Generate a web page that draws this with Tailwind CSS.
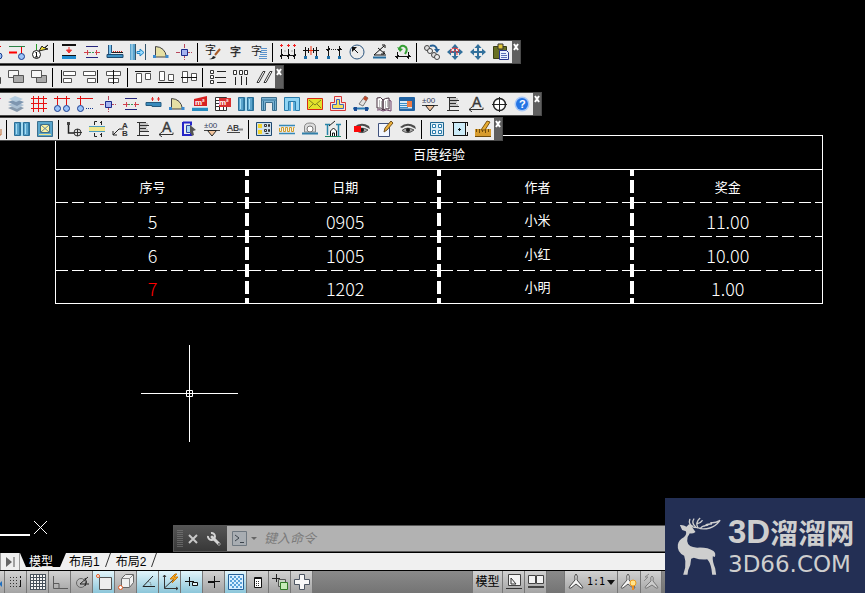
<!DOCTYPE html>
<html lang="zh-CN">
<head>
<meta charset="utf-8">
<meta name="viewport" content="width=device-width, initial-scale=1">
<title>CAD</title>
<script src="https://cdn.jsdelivr.net/npm/@tailwindcss/browser@4"></script>
</head>
<body class="flex min-h-screen flex-col overflow-hidden bg-black font-['Liberation_Sans','Noto_Sans_CJK_SC',sans-serif] text-xs text-black">

<!-- Shared icon parts -->
<svg class="hidden" aria-hidden="true">
  <defs>
    <symbol id="door" viewBox="0 0 16 16"><path d="M2.500 13V2.500Q12 3 13.500 13z" fill="#e6e0a4" stroke="#444"/><path d="M0 11h3v3h-3zM12.500 11h3v3h-3z" fill="#3b8ad0"/></symbol>
    <symbol id="node" viewBox="0 0 16 16"><path d="M0 8.500h16M8.500 0v16" stroke="#b8475c" stroke-dasharray="4 1"/><path d="M5.500 5.500h6v6h-6z" fill="#a5b2f0" stroke="#1c2a8c"/></symbol>
    <symbol id="opening" viewBox="0 0 16 16"><path d="M2 2.500h12M2 13.500h12" stroke="#26267c"/><path d="M5 8.500h6" stroke="#3d9a58" stroke-dasharray="2 1"/><path d="M0 8.500h5M3.500 6v5M11 8.500h5M12.500 6v5" stroke="#d2404c"/></symbol>
    <symbol id="window" viewBox="0 0 16 16"><path d="M.5 1.500h6v13h-6zM9.500 1.500h6v13h-6z" fill="#5ca4cc" stroke="#2a6f98"/><path d="M7 1h2v14h-2z" fill="#a8dcf2"/><path d="M2.500 3v10M11.500 3v10" stroke="#a4def4"/><path d="M5.500 2v12M14.500 2v12" stroke="#327fa8"/></symbol>
    <symbol id="move" viewBox="0 0 16 16"><path d="M8 0l3.500 4H9v3h3V4.500L16 8l-4 3.500V9H9v3h2.500L8 16l-3.500-4H7V9H4v2.500L0 8l4-3.500V7h3V4H4.500z" fill="#32709c"/></symbol>
    <symbol id="flagnote" viewBox="0 0 16 16"><path d="M4.500 1v14M2 1.500h9M5 4.500h9M5 7.500h6M5 10.500h9M2 14.500h12" stroke="#303030"/><path d="M5 3h8M5 6h7M5 9h8" stroke="#999"/></symbol>
    <symbol id="arrowtext" viewBox="0 0 16 16"><text x="4" y="11" font-family="Liberation Sans" font-size="14" stroke="#383838" stroke-width=".4" fill="#383838">A</text><path d="M1 13.500h14v-2M4 11l-3 2.500L4 16" stroke="#303030" fill="none"/></symbol>
    <symbol id="level" viewBox="0 0 16 16"><text x="0" y="7" font-family="Liberation Sans" font-size="8" fill="#34405c">±00</text><path d="M0 9.500h16" stroke="#444"/><path d="M3.500 9.500h9L8 15z" fill="#f2c49c" stroke="#222"/></symbol>
    <symbol id="eye" viewBox="0 0 16 16"><path d="M0 6Q7 0 15 5l1 3-3-1.500Q8 3 2 7z" fill="#4c4c4c"/><path d="M2 9.500Q7 5 14 9q-6 5-12 .5z" fill="#aaa" stroke="#555"/><circle cx="8" cy="9" r="2" fill="#1c1c1c"/></symbol>
  </defs>
</svg>

<main class="relative flex-1">
  <!-- Drawing: table entity -->
  <table class="mt-[135px] mr-[42px] ml-[55px] w-[calc(100%-97px)] table-fixed border-separate border-spacing-0 border border-white text-center text-[13px] text-white [&_td]:p-0 [&_th]:p-0 [&_th]:font-normal">
    <colgroup><col class="w-[25.2%]"><col class="w-[25.1%]"><col class="w-[25.1%]"><col></colgroup>
    <thead>
      <tr class="h-[34px]"><th colspan="4" class="border-b border-white pt-1!">百度经验</th></tr>
      <tr class="h-[33px] [&>th]:pt-[2px]! [&>th]:[background:repeating-linear-gradient(90deg,#fff_0_12px,transparent_12px_16px,#fff_16px_28px,transparent_28px_33px)_0_100%/100%_1px_no-repeat] [&>th:not(:last-child)]:[background:repeating-linear-gradient(180deg,#fff_0_6px,transparent_6px_10px,#fff_10px_17px)_100%_0/4px_100%_no-repeat,repeating-linear-gradient(90deg,#fff_0_12px,transparent_12px_16px,#fff_16px_28px,transparent_28px_33px)_0_100%/100%_1px_no-repeat]">
        <th>序号</th><th>日期</th><th>作者</th><th>奖金</th>
      </tr>
    </thead>
    <tbody class="[&>tr>td]:pt-[2px]! [&>tr>td:not(:last-child)]:[background:repeating-linear-gradient(180deg,#fff_0_6px,transparent_6px_10px,#fff_10px_17px)_100%_0/4px_100%_no-repeat,repeating-linear-gradient(90deg,#fff_0_12px,transparent_12px_16px,#fff_16px_28px,transparent_28px_33px)_0_100%/100%_1px_no-repeat] [&>tr>td:last-child]:[background:repeating-linear-gradient(90deg,#fff_0_12px,transparent_12px_16px,#fff_16px_28px,transparent_28px_33px)_0_100%/100%_1px_no-repeat] [&>tr:last-child>td:last-child]:bg-none! [&>tr:last-child>td:not(:last-child)]:[background:repeating-linear-gradient(180deg,#fff_0_6px,transparent_6px_10px,#fff_10px_17px)_100%_0/4px_100%_no-repeat]! [&_.num]:font-['Noto_Sans_CJK_SC',sans-serif] [&_.num]:text-lg [&_.num]:leading-6 [&_.num]:font-light">
      <tr class="h-[34px]"><td class="num">5</td><td class="num">0905</td><td>小米</td><td class="num">11.00</td></tr>
      <tr class="h-[34px]"><td class="num">6</td><td class="num">1005</td><td>小红</td><td class="num">10.00</td></tr>
      <tr class="h-[32px]"><td class="num text-[#f00]">7</td><td class="num">1202</td><td>小明</td><td class="num">1.00</td></tr>
    </tbody>
  </table>

  <!-- Crosshair cursor -->
  <svg class="absolute top-[345px] left-[141px] h-[97px] w-[97px]" viewBox="0 0 97 97" fill="none" stroke="#fff"><path d="M0 48.500h97M48.500 0v97M45.500 45.500h6v6h-6z"/></svg>
  <!-- UCS axis -->
  <svg class="absolute bottom-[17px] left-0 h-4 w-12" viewBox="0 0 48 16" fill="none" stroke="#fff"><path d="M34 1l13 13M47 1l-13 13"/><path d="M0 15h30" stroke-width="2"/></svg>

  <!-- Floating toolbars -->
  <div class="absolute top-10 left-0 flex flex-col items-start
    [&>div]:flex [&>div]:h-6 [&>div]:border-y [&>div]:border-r [&>div]:border-[#4a4a4a] [&>div]:bg-[#ececec]
    [&_button]:flex [&_button]:w-[23px] [&_button]:shrink-0 [&_button]:items-center [&_button]:justify-center
    [&_svg]:size-4 [&_svg]:overflow-visible [&_svg]:fill-none
    [&_i]:mx-[2px] [&_i]:h-[19px] [&_i]:w-[2px] [&_i]:self-center [&_i]:border-l [&_i]:border-black
    [&_.close]:w-2! [&_.close]:items-start! [&_.close]:bg-[#5f5f5f] [&_.close]:pt-[3px] [&_.close_svg]:h-[6px]! [&_.close_svg]:w-[6px]!">

    <div class="-ml-[18px]" role="toolbar" aria-label="轴网与墙体">
      <button aria-label="轴线"><svg viewBox="0 0 16 16"><path d="M3 2.500h12M13.500 2v8" stroke="#d00"/><circle cx="13" cy="12" r="3" fill="#9cc4f8" stroke="#1a3c90"/></svg></button>
      <button aria-label="轴号"><svg viewBox="0 0 16 16"><path d="M0 2.500h16" stroke="#2c8246"/><path d="M0 8.500h8" stroke="#f00" stroke-width="2"/><path d="M12.500 3v7" stroke="#e00"/><circle cx="12.500" cy="12.500" r="3" fill="#9cc4f8" stroke="#1a3c90"/></svg></button>
      <button aria-label="编号"><svg viewBox="0 0 16 16"><circle cx="4.500" cy="10.500" r="4" fill="#fff" stroke="#111"/><path d="M3.500 9l1-1v5M3 13h3" stroke="#111"/><path d="M4.500 6V0" stroke="#2b9b2b"/><path d="M7 7l3-5 2 2 4-3-3 3 3 1-5 1z" fill="#f2e032" stroke="#222"/></svg></button>
      <i></i>
      <button aria-label="移动墙"><svg viewBox="0 0 16 16"><path d="M1 1h14" stroke="#111" stroke-width="2"/><path d="M8 3v6M5.500 6L8 9l2.500-3z" stroke="#e33" fill="#e33"/><path d="M1 11.500h14" stroke="#111"/><path d="M1 13.500h14" stroke="#228ed2" stroke-width="3"/></svg></button>
      <button aria-label="开洞"><svg><use href="#opening"/></svg></button>
      <button aria-label="墙角"><svg viewBox="0 0 16 16"><path d="M1.500 1v9M4.500 1v8" stroke="#2a557e"/><path d="M2 1h2v10h-2z" fill="#7cc4ee"/><path d="M0 10.500h16v3H0z" fill="#3f92c4" stroke="#1e4a70"/><path d="M6 7.500h9" stroke="#d22" stroke-dasharray="1 1"/><path d="M5 8.500h11" stroke="#222"/></svg></button>
      <button aria-label="偏移墙"><svg viewBox="0 0 16 16"><path d="M0 0h5v16H0z" fill="#5aa3cd"/><path d="M2 0v16" stroke="#bfe5f6"/><path d="M5.500 0v16M15.500 0v16" stroke="#35566c"/><path d="M7 7.500h3V5l4 3.500-4 3.500V9.500H7z" fill="#9bdcff" stroke="#1c86c8"/></svg></button>
      <button aria-label="门"><svg><use href="#door"/></svg></button>
      <button aria-label="节点"><svg><use href="#node"/></svg></button>
      <i></i>
      <button aria-label="文字样式"><svg viewBox="0 0 16 16"><text x="0" y="10" font-size="11" fill="#111" font-family="Noto Sans CJK SC">字</text><path d="M15 5l-5 6" stroke="#a85c28" stroke-width="2"/><path d="M4 15q3 0 4-3l3 1q-2 3-7 2z" fill="#222"/></svg></button>
      <button aria-label="单行文字"><svg viewBox="0 0 16 16"><text x="2" y="12" font-size="11" fill="#222" stroke="#222" stroke-width=".3" font-family="Noto Sans CJK SC">字</text></svg></button>
      <button aria-label="多行文字"><svg viewBox="0 0 16 16"><text x="0" y="11" font-size="11" fill="#222" font-family="Noto Sans CJK SC">字</text><path d="M10 4.500h6M10 6.500h6M9 8.500h7M9 10.500h7M8 12.500h8M8 14.500h8" stroke="#5a92cc"/></svg></button>
      <i></i>
      <button aria-label="门窗标注"><svg viewBox="0 0 16 16"><path d="M1.500 0v3M0 1.500h3M8.500 0v3M7 1.500h3M14.500 0v3M13 1.500h3" stroke="#f02020"/><path d="M1.500 5v10M8.500 5v10M14.500 5v10M0 11.500h16M0 13l3-3M7 13l3-3M13 13l3-3" stroke="#111"/><path d="M4.500 7h1M11.500 7h1" stroke="#666"/></svg></button>
      <button aria-label="逐点标注"><svg viewBox="0 0 16 16"><path d="M0 6.500h16M2.500 3v9M5.500 4v5M10.500 4v5M13.500 3v9" stroke="#111"/><path d="M8 2v9M6 6.500h4" stroke="#f03010"/><path d="M1 12h3v3H1zM12 12h3v3h-3z" fill="#1d6fa8"/></svg></button>
      <button aria-label="两点标注"><svg viewBox="0 0 16 16"><path d="M0 5.500h4M12 5.500h4M2.500 2v10M13.500 2v10M1 7l3-3M12 7l3-3" stroke="#111"/><path d="M5 5.500h7" stroke="#222" stroke-dasharray="1 1"/><path d="M1 12h3v3H1zM12 12h3v3h-3z" fill="#1d6fa8"/></svg></button>
      <button aria-label="半径标注"><svg viewBox="0 0 16 16"><circle cx="8" cy="8" r="7" stroke="#2c5680"/><path d="M9 9L4 4" stroke="#111"/><path d="M3 3h5L3 8z" fill="#111"/></svg></button>
      <button aria-label="角度标注"><svg viewBox="0 0 16 16"><path d="M12 2L2 11h12M6 4l7 6M10 1h3v3M12 7v3h-3" stroke="#111"/><path d="M1 13.500h13" stroke="#256c9e" stroke-width="2"/></svg></button>
      <button aria-label="更新标注"><svg viewBox="0 0 16 16"><path d="M4 6Q5 1 9 2q5 2 1 8" stroke="#35a035" stroke-width="2"/><path d="M2 3l3 5 3-3z" fill="#35a035"/><path d="M0 12.500h16M2.500 8v7M13.500 8v7M1 14l3-3M12 14l3-3" stroke="#111"/></svg></button>
      <i></i>
      <button aria-label="复制"><svg viewBox="0 0 16 16"><circle cx="3" cy="4" r="2.500" stroke="#444" fill="#ddd"/><circle cx="6" cy="7" r="2.500" stroke="#444" fill="#eee"/><circle cx="10" cy="11" r="2.500" stroke="#444" fill="#ddd"/><circle cx="13" cy="13" r="2.500" stroke="#444" fill="#eee"/><path d="M6 2q6-2 7 4" stroke="#245f94" stroke-width="2"/><path d="M10 5h6l-3 4z" fill="#245f94"/></svg></button>
      <button aria-label="自由移动"><svg viewBox="0 0 16 16"><use href="#move"/><path d="M4 9q-1-5 4-5 4 0 4 4M6 8q2-3 4 0v3" stroke="#f23030"/></svg></button>
      <button aria-label="移动"><svg><use href="#move"/></svg></button>
      <button aria-label="粘贴"><svg viewBox="0 0 16 16"><path d="M.5 2.500h13v12H.5z" fill="#687024" stroke="#3a3f14"/><path d="M5 0h5v5H5z" fill="#e0c63a" stroke="#333"/><path d="M6.500 6.500h7l2 2v7h-9z" fill="#e9f0ff" stroke="#26348c"/><path d="M8 9.500h5M8 11.500h6M8 13.500h6" stroke="#5a70b8"/></svg></button>
      <button class="close" aria-label="关闭"><svg viewBox="0 0 6 6"><path d="M1 0l4 6M5 0l-4 6" stroke="#fff" stroke-width="2"/></svg></button>
    </div>

    <div class="mt-px -ml-[19px]" role="toolbar" aria-label="对齐">
      <button aria-label="次序"><svg viewBox="0 0 16 16"><path d="M8.500 8.500h7v6h-7z" fill="#888" stroke="#444"/></svg></button>
      <button aria-label="前置"><svg viewBox="0 0 16 16"><path d="M.5 1.500h10v7h-10z" fill="#f6f6f6" stroke="#555"/><path d="M5.500 6.500h10v7h-10z" fill="#aaa" stroke="#555"/></svg></button>
      <button aria-label="后置"><svg viewBox="0 0 16 16"><path d="M5.500 6.500h10v7h-10z" fill="#aaa" stroke="#555"/><path d="M.5 1.500h10v7h-10z" fill="#f6f6f6" stroke="#555"/></svg></button>
      <i></i>
      <button aria-label="左对齐"><svg viewBox="0 0 16 16"><path d="M1.500 1v13" stroke="#111"/><path d="M3.500 2.500h12v4h-12zM3.500 9.500h8v4h-8z" fill="#fff" stroke="#555"/></svg></button>
      <button aria-label="右对齐"><svg viewBox="0 0 16 16"><path d="M14.500 1v13" stroke="#111"/><path d="M.5 2.500h12v4H.5zM4.500 9.500h8v4h-8z" fill="#fff" stroke="#555"/></svg></button>
      <button aria-label="水平居中"><svg viewBox="0 0 16 16"><path d="M.5 2.500h14v4H.5zM2.500 9.500h10v4h-10z" fill="#fff" stroke="#555"/><path d="M7.500 1v14" stroke="#111"/></svg></button>
      <i></i>
      <button aria-label="顶对齐"><svg viewBox="0 0 16 16"><path d="M0 2.500h16" stroke="#111"/><path d="M1.500 4.500h5v9h-5zM10.500 4.500h5v6h-5z" fill="#fff" stroke="#555"/></svg></button>
      <button aria-label="底对齐"><svg viewBox="0 0 16 16"><path d="M0 13.500h16" stroke="#111"/><path d="M1.500 2.500h5v9h-5zM10.500 5.500h5v6h-5z" fill="#fff" stroke="#555"/></svg></button>
      <button aria-label="垂直居中"><svg viewBox="0 0 16 16"><path d="M1.500 2.500h5v11h-5zM10.500 4.500h5v7h-5z" fill="#fff" stroke="#555"/><path d="M0 8.500h16" stroke="#111"/></svg></button>
      <i></i>
      <button aria-label="行距"><svg viewBox="0 0 16 16"><path d="M.5 1.500h3v3h-3zM.5 6.500h3v3h-3zM.5 11.500h3v3h-3z" fill="#fff" stroke="#333"/><path d="M7 2.500h9M5 8.500h11M7 13.500h9" stroke="#222"/></svg></button>
      <button aria-label="列距"><svg viewBox="0 0 16 16"><path d="M.5 1.500h3v4h-3zM6.500 1.500h3v4h-3zM11.500 1.500h3v4h-3z" fill="#fff" stroke="#333"/><path d="M2.500 8v8M8.500 7v9M13.500 8v8" stroke="#222"/></svg></button>
      <button aria-label="平行"><svg viewBox="0 0 16 16"><path d="M1 13.500L7 2.500h2L3 13.500zM8 13.500L14 2.500h2L10 13.500z" stroke="#333" fill="#fff"/></svg></button>
      <button class="close" aria-label="关闭"><svg viewBox="0 0 6 6"><path d="M1 0l4 6M5 0l-4 6" stroke="#fff" stroke-width="2"/></svg></button>
    </div>

    <div class="mt-[3px] -ml-[19px]" role="toolbar" aria-label="建筑">
      <button aria-label="标记"><svg viewBox="0 0 16 16"><path d="M12 2.500h4M14 1v5" stroke="#e0408c"/></svg></button>
      <button aria-label="图层"><svg viewBox="0 0 16 16"><path d="M0 12l8-3 8 3-7 4z" fill="#8799ac"/><path d="M0 9l8-3 8 3-7 4z" fill="#abc0d3"/><path d="M0 6l8-3 8 3-7 4z" fill="#7e96b0"/><path d="M1 3l6-3 8 3-7 3z" fill="#b4ccdf"/></svg></button>
      <button aria-label="轴网"><svg viewBox="0 0 16 16"><path d="M2.500 0v16M7.500 0v16M12.500 0v16M0 2.500h16M0 7.500h16M0 12.500h16" stroke="#e81010"/></svg></button>
      <button aria-label="双轴号"><svg viewBox="0 0 16 16"><path d="M0 2.500h16M3.500 0v9M12.500 0v9" stroke="#e01010"/><circle cx="3.500" cy="12.500" r="3" fill="#9cc4f8" stroke="#1a3c90"/><circle cx="12.500" cy="12.500" r="3" fill="#9cc4f8" stroke="#1a3c90"/></svg></button>
      <button aria-label="单轴号"><svg viewBox="0 0 16 16"><path d="M0 2.500h16M3.500 0v9" stroke="#e01010"/><circle cx="3.500" cy="12.500" r="3" fill="#9cc4f8" stroke="#1a3c90"/><path d="M9 12.500h7" stroke="#1a3c90" stroke-dasharray="1 1"/></svg></button>
      <button aria-label="柱"><svg><use href="#node"/></svg></button>
      <button aria-label="墙洞"><svg><use href="#opening"/></svg></button>
      <button aria-label="墙体"><svg viewBox="0 0 16 16"><path d="M0 6.500h15v4H6v-1H0z" fill="#398bbd" stroke="#265b80"/><path d="M6.500 1v4M5 3h3M12.500 1v4M11 3h3" stroke="#e03030"/></svg></button>
      <button aria-label="门窗"><svg><use href="#door"/></svg></button>
      <button aria-label="房间面积"><svg viewBox="0 0 16 16"><path d="M2 3l13-3v10H2z" fill="#d82222"/><text x="3" y="9" font-size="8" font-weight="bold" font-family="Liberation Sans" fill="#fff">m²</text><path d="M0 13.500h16" stroke="#288cc0" stroke-width="3"/><path d="M0 11.500h16" stroke="#b6d8ea"/></svg></button>
      <button aria-label="面积统计"><svg viewBox="0 0 16 16"><path d="M.5 1.500h11v13H.5zM.5 4.500h11M.5 7.500h11M.5 10.500h11M4.500 1v13M8.500 1v13" stroke="#333" fill="#fff"/><path d="M4 2h12v9H4z" fill="#d83030"/><text x="4" y="9" font-size="8" font-weight="bold" font-family="Liberation Sans" fill="#fff">m²</text></svg></button>
      <button aria-label="窗"><svg><use href="#window"/></svg></button>
      <button aria-label="门洞"><svg viewBox="0 0 16 16"><path d="M.5 1.500h15v13h-4v-8h-7v8h-4z" fill="#7bb2d2" stroke="#3c6e8c"/><path d="M1 4h14M2.500 5v9M13.500 5v9" stroke="#35749a"/></svg></button>
      <button aria-label="门套"><svg viewBox="0 0 16 16"><path d="M.5 1.500h15v13h-4v-9h-7v9h-4z" fill="#8fd4f4" stroke="#2a7cab"/><path d="M5 6h2v9H5zM9 6h2v9H9z" fill="#5aaedb"/></svg></button>
      <button aria-label="信封"><svg viewBox="0 0 16 16"><path d="M.5 2.500h15v11H.5z" fill="#e2e22c" stroke="#d82a16"/><path d="M2 4l6 5 6-5M2 12l4-4M14 12l-4-4" stroke="#80801c"/></svg></button>
      <button aria-label="楼梯"><svg viewBox="0 0 16 16"><path d="M4.500.5h7v6h4v8H.5v-8h4z" fill="#f9e3dc" stroke="#d63838"/><path d="M6.500 3.500h3v5h4v4h-11v-4h4z" fill="#f4e05c" stroke="#3c65bc"/></svg></button>
      <button aria-label="擦除"><svg viewBox="0 0 16 16"><path d="M6 8l6-8 3 2-5 8z" fill="#e2e2e2" stroke="#777"/><path d="M10 3l2-3 3 2-2 3z" fill="#bd4a2c"/><path d="M0 12.500h16" stroke="#2a7cb6" stroke-width="2"/><path d="M1 11h3v4H1zM12 11h3v4h-3z" fill="#1b4b94"/></svg></button>
      <button aria-label="图库"><svg viewBox="0 0 16 16"><path d="M1 2q4-2 6 2v10Q5 11 1 12zM13 2q-4 0-6 2v10q3-2 6-1z" fill="#fff" stroke="#46303e"/><path d="M13 4l2 1v10q-5-2-8 0-3-2-6-1" stroke="#6c3f68"/><path d="M3.500 4v7M5.500 5v7M9.500 5v7M11.500 4v7" stroke="#bbb"/></svg></button>
      <button aria-label="面板"><svg viewBox="0 0 16 16"><path d="M.5 1.500h15v13H.5z" fill="#d8ecfa" stroke="#2264a4"/><path d="M1 2h14v3H1z" fill="#2264a4"/><path d="M1 7.500h8M1 9.500h8M1 11.500h8" stroke="#3b8cc6"/><path d="M8 5h5v6H8z" fill="#ee7c45"/><path d="M14 4v10M1 13.500h14" stroke="#2264a4" stroke-width="2"/></svg></button>
      <button aria-label="标高"><svg><use href="#level"/></svg></button>
      <button aria-label="做法标注"><svg><use href="#flagnote"/></svg></button>
      <button aria-label="箭头引注"><svg><use href="#arrowtext"/></svg></button>
      <button aria-label="指北针"><svg viewBox="0 0 16 16"><circle cx="8.500" cy="8.500" r="6" fill="#fff" stroke="#222" stroke-width="1.500"/><path d="M1 8.500h15M8.500 1v15" stroke="#222"/></svg></button>
      <button aria-label="帮助"><svg viewBox="0 0 16 16"><circle cx="8" cy="8" r="7.500" fill="#a7c8f8"/><circle cx="8" cy="8" r="6" fill="#2474e4"/><text x="5" y="12" font-size="11" font-weight="bold" font-family="Liberation Sans" fill="#fff">?</text></svg></button>
      <button class="close" aria-label="关闭"><svg viewBox="0 0 6 6"><path d="M1 0l4 6M5 0l-4 6" stroke="#fff" stroke-width="2"/></svg></button>
    </div>

    <div class="mt-px -ml-[19px]" role="toolbar" aria-label="标注与图案">
      <button aria-label="尺寸"><svg viewBox="0 0 16 16"><path d="M16 8v6h-2" stroke="#c06a30"/></svg></button>
      <i></i>
      <button aria-label="窗"><svg><use href="#window"/></svg></button>
      <button aria-label="图案"><svg viewBox="0 0 16 16"><path d="M.5.5h15v15H.5z" fill="#5ba6cc" stroke="#3b6f8c"/><path d="M3.500 3.500h9v8h-9z" fill="#fff2a0" stroke="#3f6f88"/><path d="M4 4l8 7M12 4l-8 7" stroke="#5e86a0"/><path d="M2 13.500h12" stroke="#ece48c"/></svg></button>
      <i></i>
      <button aria-label="索引"><svg viewBox="0 0 16 16"><path d="M2.500 2v10h6" stroke="#222" stroke-width="1.500"/><path d="M1 1h3v3H1z" fill="#444"/><circle cx="11.500" cy="11.500" r="3.500" stroke="#333" fill="#ddd"/><path d="M8 11.500h8M11.500 8v7" stroke="#333"/></svg></button>
      <button aria-label="剖切"><svg viewBox="0 0 16 16"><path d="M0 6h16v4H0z" fill="#f2e78c"/><path d="M0 5.500h16M0 10.500h16" stroke="#4d9cc0"/><path d="M5.500 4V.5H8M5.500 12v3.500H8M12.500 0v4M12.500 12v4M11 1.500h1M11 13.500h1" stroke="#222"/></svg></button>
      <button aria-label="引出标注"><svg viewBox="0 0 16 16"><path d="M1 14l6-6h5M1 10v4h4" stroke="#222"/><text x="10" y="7" font-size="8" font-weight="bold" fill="#333" font-family="Liberation Sans">A</text><text x="10" y="15" font-size="8" font-weight="bold" fill="#333" font-family="Liberation Sans">B</text></svg></button>
      <button aria-label="做法标注"><svg><use href="#flagnote"/></svg></button>
      <button aria-label="箭头引注"><svg><use href="#arrowtext"/></svg></button>
      <button aria-label="索引图名"><svg viewBox="0 0 16 16"><path d="M2 1.500h8v3M2 1v13h8v-2" stroke="#2424c8" stroke-width="2"/><path d="M5.500 4.500h4v7h-4z" fill="#a8d8f8" stroke="#2c47a4"/><path d="M9 4l6 5-3 1 1 4-2 1-2-4z" fill="#555"/></svg></button>
      <button aria-label="标高"><svg><use href="#level"/></svg></button>
      <button aria-label="文字标注"><svg viewBox="0 0 16 16"><text x="0" y="10" font-size="9" fill="#222" stroke="#222" stroke-width=".2" font-family="Liberation Sans">AB</text><path d="M0 11.500h13" stroke="#444"/><path d="M12 8.500h4" stroke="#888" stroke-width="2"/></svg></button>
      <i></i>
      <button aria-label="图块"><svg viewBox="0 0 16 16"><path d="M.5 1.500h15v13H.5z" fill="#cfe0ec" stroke="#1e4870"/><path d="M2 3h4v4H2zM2 9h4v4H2z" fill="#f2d42c"/><path d="M8.500 3.500h2v2h-2zM12.500 3.500h1v2h-1zM8.500 8.500h2v2h-2zM12.500 8.500h1v2h-1zM9.500 12.500h3" stroke="#333"/></svg></button>
      <button aria-label="保温层"><svg viewBox="0 0 16 16"><path d="M0 4.500h16" stroke="#3488b8" stroke-width="1.500"/><path d="M.5 7v3.500h2v-4h2v4h2v-4h2v4h2v-4h2v4h2v-4h1" stroke="#d29d28"/><path d="M0 12.500h16" stroke="#3488b8" stroke-width="1.500"/></svg></button>
      <button aria-label="台阶"><svg viewBox="0 0 16 16"><path d="M2.500 11V6q0-4 5.500-4t5.500 4v5z" fill="#ddd" stroke="#888"/><circle cx="8" cy="8" r="3" fill="#fff" stroke="#777"/><path d="M0 12.500h16" stroke="#317fa8" stroke-width="2"/></svg></button>
      <button aria-label="立面门"><svg viewBox="0 0 16 16"><path d="M0 3.500h5M2.500 4v10M13.500 3v12M11 3.500h5" stroke="#2684a8" stroke-width="1.500"/><path d="M4 5l6-5" stroke="#222"/><path d="M5.500 15v-5l3-3 3 3v5M7.500 15v-3h2v3" fill="#fff" stroke="#111"/><path d="M0 15.500h16" stroke="#1f8260"/></svg></button>
      <i></i>
      <button aria-label="隐藏"><svg viewBox="0 0 16 16"><use href="#eye"/><path d="M0 5h7v6H0z" fill="#fb0808"/></svg></button>
      <button aria-label="编辑"><svg viewBox="0 0 16 16"><path d="M1.500 2.500h11v13h-11z" fill="#f2f6ff" stroke="#40517c"/><path d="M7 11l1-4 6-7 2 2-6 7z" fill="#ecb13a" stroke="#705020"/></svg></button>
      <button aria-label="显示"><svg><use href="#eye"/></svg></button>
      <i></i>
      <button aria-label="平面布局"><svg viewBox="0 0 16 16"><path d="M1.500 1.500h13v13h-13z" fill="#dcedf6" stroke="#1d648e"/><path d="M3.500 3.500h3v3h-3zM9.500 3.500h3v3h-3zM3.500 9.500h3v3h-3zM9.500 9.500h3v3h-3z" fill="#fff" stroke="#2b7cac"/></svg></button>
      <button aria-label="插入图框"><svg viewBox="0 0 16 16"><path d="M1.500 1.500h12v13h-12z" fill="#ccebf8" stroke="#111"/><path d="M0 1.500h16M1 14.500h15M15.500 2v3M15.500 11v3" stroke="#111"/><path d="M7.500 7v3M6 8.500h3" stroke="#111"/></svg></button>
      <button aria-label="量尺"><svg viewBox="0 0 16 16"><path d="M0 8h16v7H0z" fill="#d79c2e"/><path d="M1.500 8v3M4.500 8v4M7.500 8v3M10.500 8v4M13.500 8v3M0 15.500h16" stroke="#704c0c"/><path d="M6 9l6-9 3 1-5 8z" fill="#e8ad30" stroke="#7c5414"/></svg></button>
      <button class="close" aria-label="关闭"><svg viewBox="0 0 6 6"><path d="M1 0l4 6M5 0l-4 6" stroke="#fff" stroke-width="2"/></svg></button>
    </div>
  </div>

  <!-- Floating command line -->
  <form class="absolute right-0 bottom-px left-[173px] flex h-[27px] items-stretch border border-r-0 border-[#565656] bg-[#b2b2b2]">
    <div class="flex w-[53px] shrink-0 items-center gap-2 bg-linear-to-b from-[#555] to-[#383838] pl-[3px]">
      <svg class="h-[18px] w-[6px] shrink-0" viewBox="0 0 6 18"><path d="M1 0v18M3 0v18M5 0v18" stroke="#8a8a8a" stroke-dasharray="1 1"/></svg>
      <button type="button" aria-label="关闭命令行" class="-ml-[3px]"><svg class="size-[10px]" viewBox="0 0 10 10"><path d="M1 1l8 8M9 1l-8 8" stroke="#c8c8c8" stroke-width="2"/></svg></button>
      <button type="button" aria-label="自定义"><svg class="size-4" viewBox="0 0 16 16" fill="none"><path d="M6 6l7 7" stroke="#d4d4d4" stroke-width="3" stroke-linecap="round"/><path d="M5 2A3.500 3.500 0 1 1 2 5" stroke="#d4d4d4" stroke-width="2"/><circle cx="13" cy="13" r="1" fill="#555"/></svg></button>
    </div>
    <button type="button" class="ml-[5px] flex items-center gap-1" aria-label="最近的命令">
      <svg class="size-[15px]" viewBox="0 0 15 15" fill="none"><path d="M.5.5h14v14H.5z" fill="#a8adb2" stroke="#6f7880"/><path d="M3 4l4 3-4 3M8 11.500h4" stroke="#3c444c"/></svg>
      <svg class="h-[3px] w-[6px]" viewBox="0 0 6 3"><path d="M0 0h6L3 3z" fill="#666"/></svg>
    </button>
    <input aria-label="命令" placeholder="键入命令" class="ml-[7px] min-w-0 flex-1 bg-transparent text-[13px] text-black italic outline-none placeholder:text-[#7b7b7b]">
  </form>
</main>

<!-- Layout tabs -->
<nav class="flex h-[18px] items-stretch border-b border-black bg-[#f0f0f0]" aria-label="布局">
  <button class="flex w-5 items-center justify-center border-x border-[#999]" aria-label="最后一个布局"><svg class="h-[10px] w-[9px]" viewBox="0 0 9 10"><path d="M0 0v10l6-5z" fill="#666"/><path d="M8 0v10" stroke="#555"/></svg></button>
  <a href="#model" class="flex w-[46px] items-center pt-px pl-[9px] leading-4 text-white bg-black [clip-path:polygon(0_0,100%_0,87%_82%,13%_82%)]">模型</a>
  <a href="#layout1" class="flex items-center pl-[3px] leading-4 whitespace-nowrap">布局1</a>
  <svg class="mx-[5px] h-[14px] w-[6px] self-start" viewBox="0 0 6 14"><path d="M5.500 0L.5 14" stroke="#333"/></svg>
  <a href="#layout2" class="flex items-center leading-4 whitespace-nowrap">布局2</a>
  <svg class="mx-[5px] h-[14px] w-[6px] self-start" viewBox="0 0 6 14"><path d="M5.500 0L.5 14" stroke="#333"/></svg>
</nav>

<!-- Status bar -->
<footer class="flex h-[22px] items-stretch bg-linear-to-b from-[#8a8a8a] to-[#747474] pr-[203px] [&_button]:flex [&_button]:shrink-0 [&_button]:items-center [&_button]:justify-center [&_button]:border-r [&_button]:border-[#777] [&_button]:bg-linear-to-b [&_button]:from-[#d2d2d2] [&_button]:to-[#a4a4a4] [&_svg]:fill-none [&_.on]:from-[#e2f5fb]! [&_.on]:to-[#8cc6da]!">
  <div class="-ml-[17px] flex [&>button]:w-[22px] [&_svg]:size-[18px]">
    <button aria-label="推断约束"><svg viewBox="0 0 18 18"><path d="M14 11l3-3v6z" fill="#2070c0"/></svg></button>
    <button aria-label="捕捉"><svg viewBox="0 0 18 18"><path d="M3 4.500h8M3 7.500h8M3 10.500h8M3 13.500h11" stroke="#333" stroke-dasharray="1 2"/><path d="M13.500 3v2M13.500 7v7" stroke="#111"/></svg></button>
    <button aria-label="栅格"><svg viewBox="0 0 18 18"><path d="M1.500 1.500h15v15h-15z" fill="#f6f6f6"/><path d="M1.500 1v16M4.500 1v16M7.500 1v16M10.500 1v16M13.500 1v16M16.500 1v16M1 1.500h16M1 4.500h16M1 7.500h16M1 10.500h16M1 13.500h16M1 16.500h16" stroke="#46505a"/></svg></button>
    <button aria-label="正交"><svg viewBox="0 0 18 18"><path d="M2.500 3v12.500H17M3 10.500h5v5" stroke="#5b5b5b"/></svg></button>
    <button aria-label="极轴"><svg viewBox="0 0 18 18"><circle cx="8" cy="10" r="4.500" stroke="#666"/><path d="M15 4l-8 7h9M12 5q3 4 0 8" stroke="#222"/></svg></button>
    <button class="on" aria-label="对象捕捉"><svg viewBox="0 0 18 18"><path d="M4.500 4.500h12v12h-12z" fill="#eee" stroke="#555"/><circle cx="3" cy="3" r="1.500" fill="#fff" stroke="#e45820"/></svg></button>
    <button aria-label="三维对象捕捉"><svg viewBox="0 0 18 18"><path d="M4.500 5.500l4-4h8v8l-4 5h-8z" fill="#f0f0f0" stroke="#666"/><path d="M4 5.500h8.500v9M12.500 5.500l4-4" stroke="#888"/><circle cx="3.500" cy="14.500" r="2" fill="#fff" stroke="#e45820"/></svg></button>
    <button class="on" aria-label="对象追踪"><svg viewBox="0 0 18 18"><path d="M14 3L4 13.500h12" stroke="#222"/><path d="M9 8q3 1 3 5" stroke="#555" stroke-dasharray="1 1"/></svg></button>
    <button class="on" aria-label="动态UCS"><svg viewBox="0 0 18 18"><path d="M3.500 2v13.500H17M3.500 15L13 6M2 4l1.500-2L5 4M15 14l2 1.500-2 1.500" stroke="#333"/><path d="M14 1l-5 5h4l-2 4 6-6h-4l3-3z" fill="#f8a91c" stroke="#c77a10"/></svg></button>
    <button class="on" aria-label="动态输入"><svg viewBox="0 0 18 18"><path d="M2 8.500h9M6.500 4v9" stroke="#111"/><path d="M9.500 9.500h5v3h-5z" stroke="#111" fill="#e8f6fa"/></svg></button>
    <button aria-label="线宽"><svg viewBox="0 0 18 18"><path d="M3 9h6" stroke="#111" stroke-width="2"/><path d="M8 8.500h7M9.500 3v12" stroke="#111"/></svg></button>
    <button class="on" aria-label="透明度"><svg viewBox="0 0 18 18"><path d="M1.500 1.500h15v15h-15z" fill="#d8efff" stroke="#246099"/><path d="M3 4h12M3 8h12M3 12h12" stroke="#5aa2d8" stroke-width="2" stroke-dasharray="2 2"/><path d="M5 6h10M5 10h10M5 14h10" stroke="#5aa2d8" stroke-width="2" stroke-dasharray="2 2"/></svg></button>
    <button aria-label="快捷特性"><svg viewBox="0 0 18 18"><path d="M5.500 4.500h7v10h-7z" fill="#fff" stroke="#111"/><path d="M6 5.500h6" stroke="#111"/><path d="M7 8.500h4M7 10.500h4M7 12.500h4" stroke="#333" stroke-dasharray="1 1"/></svg></button>
    <button aria-label="选择循环"><svg viewBox="0 0 18 18"><path d="M5.500 1v8M1 5.500h8" stroke="#222"/><path d="M7.500 6.500h7v7h-7z" fill="#c9d6c6" stroke="#555"/><path d="M9.500 9.500h7v7h-7z" fill="#c6ebb8" stroke="#317a26"/></svg></button>
    <button aria-label="注释监视器"><svg viewBox="0 0 18 18"><path d="M6.500 1.500h5v5h5v5h-5v5h-5v-5h-5v-5h5z" fill="#f8f8f8" stroke="#4c5562"/></svg></button>
  </div>
  <div class="ml-auto flex [&_svg]:size-[18px]">
    <button class="w-[31px] border-l">模型</button>
    <button class="w-[22px]" aria-label="快速查看布局"><svg viewBox="0 0 18 18"><path d="M3.500 1.500h12v11h-12z" fill="#f4f4f4" stroke="#444"/><path d="M6 5v6h5zM1 15.500h16" stroke="#333"/></svg></button>
    <button class="w-[22px]" aria-label="快速查看图形"><svg viewBox="0 0 18 18"><path d="M1.500 2.500h7v8h-7zM9.500 2.500h7v8h-7z" fill="#f4f4f4" stroke="#444"/><path d="M1 14h16" stroke="#444" stroke-width="2"/></svg></button>
    <button class="ml-[17px] w-[54px] gap-[2px] border-l" aria-label="注释比例 1:1"><svg viewBox="0 0 18 18"><path d="M9 1q2 1 1 6l5 6q2 3-1 2l-5-4-5 4q-3 1-1-2l5-6q-1-5 1-6z" fill="#f5f5f5" stroke="#444"/></svg><span class="font-['DejaVu_Sans_Mono','Noto_Sans_CJK_SC',monospace] text-[10px]">1:1</span><svg class="h-[5px]! w-[8px]!" viewBox="0 0 8 5"><path d="M0 0h8L4 5z" fill="#111"/></svg></button>
    <button class="w-[23px]" aria-label="注释可见性"><svg viewBox="0 0 18 18"><path d="M8 1q2 1 1 6l5 6q2 3-1 2l-5-4-5 4q-3 1-1-2l5-6q-1-5 1-6z" fill="#f5f5f5" stroke="#555"/><circle cx="13" cy="10" r="3" fill="#ffe48c" stroke="#ed9a1c"/><path d="M12 13h2v4h-2z" fill="#eb8d20"/></svg></button>
    <button class="w-[21px]" aria-label="自动缩放"><svg viewBox="0 0 18 18"><path d="M10 3q2 1 1 5l4 5q2 3-1 2l-4-3-5 3q-3 1-1-2l5-5q-1-4 1-5z" fill="#ccc" stroke="#777"/><path d="M7 1L3 4h3l-4 4" stroke="#888"/></svg></button>
  </div>
</footer>

<!-- Site badge -->
<aside class="fixed right-0 bottom-0 flex h-[95px] w-[200px] items-center bg-[#232f54] pl-[10px] text-[#cecece]">
  <svg class="h-[60px] w-[47px] shrink-0" viewBox="30 55 140 180" fill="#cecece"><path d="M44 82Q56 81 64 87L72 79 80 87 91 103Q82 109 74 107 66 116 66 130 68 149 96 150 126 148 145 160 153 166 149 178L143 176Q141 190 150 212L153 231H141L139 215Q135 193 126 185 108 188 86 180L78 183Q77 204 69 218L67 231H54L60 210Q63 190 57 174 35 163 38 141 40 128 56 119 66 110 62 101L51 97Z"/><path d="M75 82Q76 89 98 90 112 97 134 91 151 86 165 68 149 77 137 75M83 86Q69 80 74 65M91 87Q78 76 86 64M98 91Q90 75 104 62M97 77Q105 78 111 69M106 92Q112 83 128 83M118 85Q125 78 139 79" fill="none" stroke="#cecece" stroke-width="4" stroke-linecap="round"/></svg>
  <div class="ml-[6px] whitespace-nowrap">
    <div class="flex h-[32px] items-center leading-8"><span class="font-['Liberation_Sans',sans-serif] text-[33px] font-bold">3D</span><span class="font-['Noto_Sans_CJK_SC',sans-serif] text-[28px] font-bold">溜溜网</span></div>
    <div class="mt-1 font-['DejaVu_Sans',sans-serif] text-[23px] leading-6">3D66.COM</div>
  </div>
</aside>
</body>
</html>
